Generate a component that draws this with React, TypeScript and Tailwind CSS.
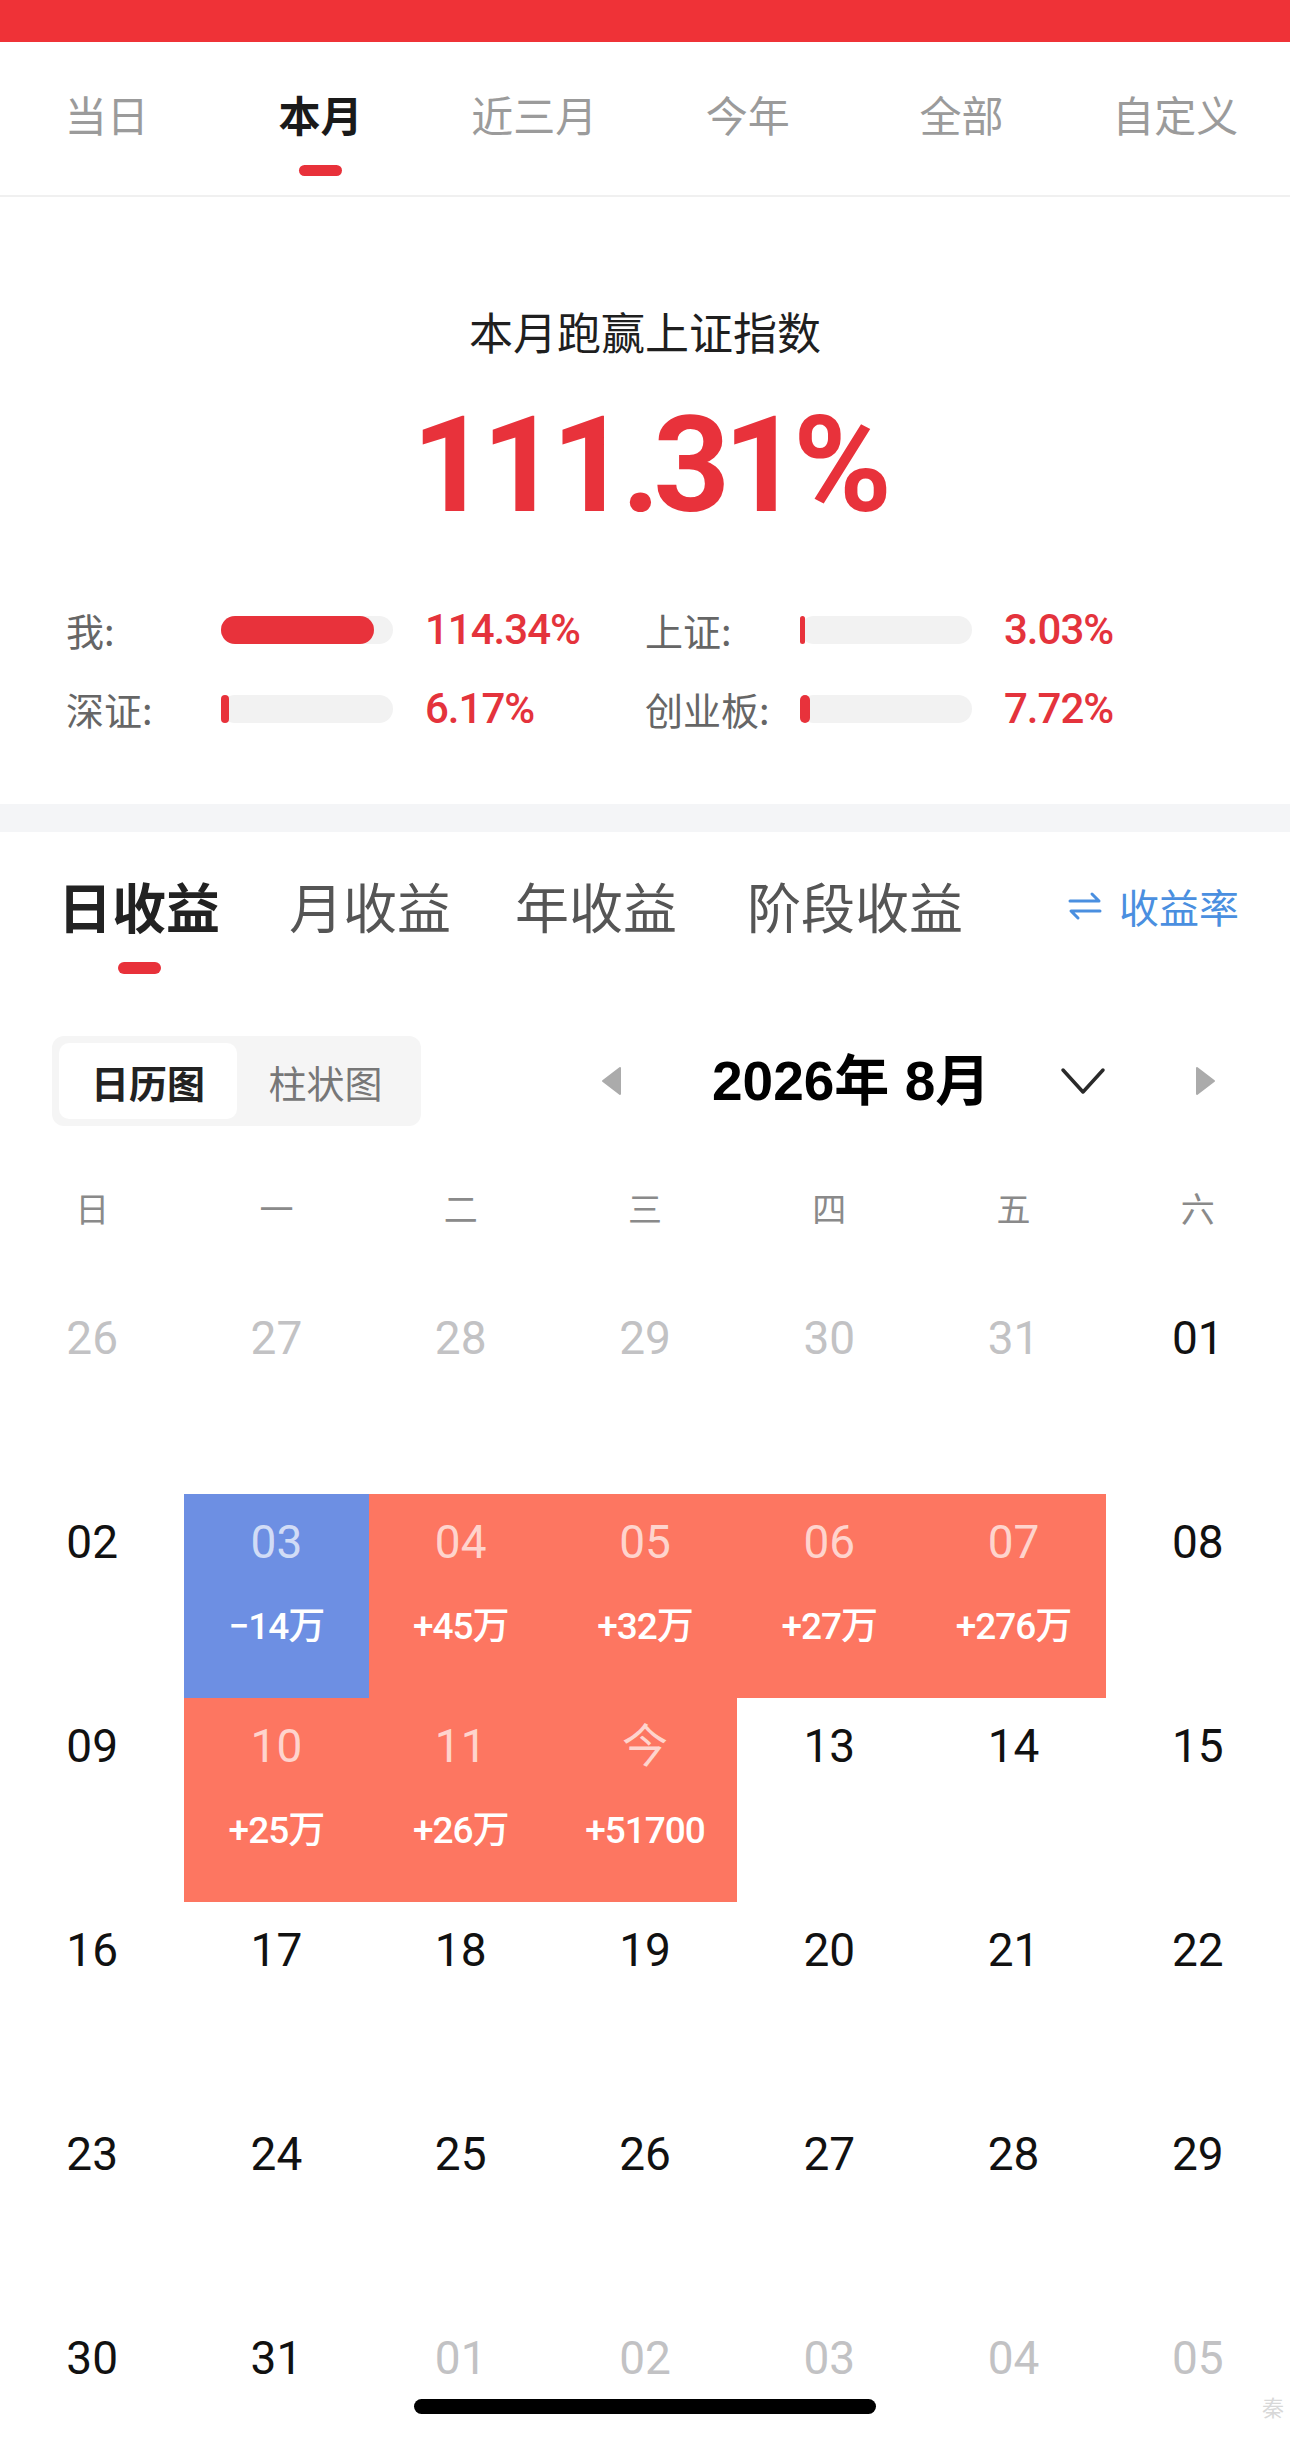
import React from 'react'

const topTabs = ['当日', '本月', '近三月', '今年', '全部', '自定义']

type Stat = { label: string; fill: number; value: string }

const stats: Stat[] = [
  { label: '我:', fill: 153, value: '114.34%' },
  { label: '上证:', fill: 5, value: '3.03%' },
  { label: '深证:', fill: 8, value: '6.17%' },
  { label: '创业板:', fill: 10, value: '7.72%' },
]

type Cell = { d: string; muted?: boolean; amt?: string; tone?: 'up' | 'down' }

const weeks: Cell[][] = [
  [
    { d: '26', muted: true },
    { d: '27', muted: true },
    { d: '28', muted: true },
    { d: '29', muted: true },
    { d: '30', muted: true },
    { d: '31', muted: true },
    { d: '01' },
  ],
  [
    { d: '02' },
    { d: '03', amt: '−14万', tone: 'down' },
    { d: '04', amt: '+45万', tone: 'up' },
    { d: '05', amt: '+32万', tone: 'up' },
    { d: '06', amt: '+27万', tone: 'up' },
    { d: '07', amt: '+276万', tone: 'up' },
    { d: '08' },
  ],
  [
    { d: '09' },
    { d: '10', amt: '+25万', tone: 'up' },
    { d: '11', amt: '+26万', tone: 'up' },
    { d: '今', amt: '+51700', tone: 'up' },
    { d: '13' },
    { d: '14' },
    { d: '15' },
  ],
  ['16', '17', '18', '19', '20', '21', '22'].map((d) => ({ d })),
  ['23', '24', '25', '26', '27', '28', '29'].map((d) => ({ d })),
  [
    { d: '30' },
    { d: '31' },
    { d: '01', muted: true },
    { d: '02', muted: true },
    { d: '03', muted: true },
    { d: '04', muted: true },
    { d: '05', muted: true },
  ],
]

function SwapIcon() {
  return (
    <svg width="36" height="30" viewBox="0 0 36 30" fill="none" stroke="#4a8fe0" strokeWidth="3" strokeLinecap="round" strokeLinejoin="round">
      <path d="M3 10 H32 L25 3" />
      <path d="M33 20 H4 L11 27" />
    </svg>
  )
}

function CalendarCell({ cell }: { cell: Cell }) {
  const bg = cell.tone === 'up' ? 'bg-[#fd7661]' : cell.tone === 'down' ? 'bg-[#6d8fe3]' : ''
  const dateColor = cell.tone ? 'text-white/70' : cell.muted ? 'text-[#c2c2c4]' : 'text-[#111111]'
  return (
    <div className={`h-[204px] flex flex-col items-center pt-[25px] ${bg}`}>
      <span className={`text-[46px] leading-none ${dateColor}`}>{cell.d}</span>
      {cell.amt && (
        <span className="mt-[43px] text-[37px] leading-none font-medium text-white tracking-[-1px]">{cell.amt}</span>
      )}
    </div>
  )
}

export default function App() {
  return (
    <div className="relative w-[1290px] h-[2439px] overflow-hidden bg-white font-['Roboto','Noto_Sans_CJK_SC',sans-serif]">
      {/* status bar */}
      <div className="h-[42px] bg-[#ef3237]" />

      {/* period tabs */}
      <div className="h-[155px] flex pr-[8px] border-b-2 border-[#f0f0f0] font-['Noto_Sans_CJK_SC',sans-serif]">
        {topTabs.map((t) => {
          const active = t === '本月'
          return (
            <div key={t} className="flex-1 flex flex-col items-center pt-[51px]">
              <span className={`text-[42px] leading-none ${active ? 'text-[#1a1a1a] font-bold' : 'text-[#9b9b9b]'}`}>{t}</span>
              {active && <span className="mt-[30px] w-[43px] h-[11px] rounded-full bg-[#e8313a]" />}
            </div>
          )
        })}
      </div>

      {/* summary */}
      <section className="h-[607px] flex flex-col items-center">
        <h1 className="mt-[112px] text-[44px] leading-none text-[#1f1f1f] font-['Noto_Sans_CJK_SC',sans-serif]">本月跑赢上证指数</h1>
        <div className="mt-[46px] pl-[7px] text-[134px] leading-none font-bold text-[#e8323b] font-['Roboto',sans-serif] tracking-[-7px]">111.31%</div>
        <div className="mt-[77px] w-full px-[66px] grid grid-cols-2 gap-y-[39px]">
          {stats.map((s) => (
            <div key={s.label} className="h-[40px] flex items-center">
              <span className="w-[155px] text-[38px] leading-none text-[#666666] font-['Noto_Sans_CJK_SC',sans-serif]">{s.label}</span>
              <div className="w-[172px] h-[28px] rounded-full bg-[#f2f2f2]">
                <div className="h-full rounded-full bg-[#e8323b]" style={{ width: s.fill }} />
              </div>
              <span className="ml-[32px] text-[42px] leading-none font-medium text-[#e4333c] tracking-[-1px]">{s.value}</span>
            </div>
          ))}
        </div>
      </section>

      <div className="h-[28px] bg-[#f4f5f7]" />

      {/* profit tabs */}
      <div className="pt-[47px] pl-[58px] pr-[51px] flex items-start font-['Noto_Sans_CJK_SC',sans-serif]">
        <div className="flex flex-col items-center">
          <span className="text-[54px] leading-none font-bold text-[#222222]">日收益</span>
          <span className="mt-[29px] w-[43px] h-[12px] rounded-full bg-[#e8313a]" />
        </div>
        <span className="ml-[69px] text-[54px] leading-none text-[#555555]">月收益</span>
        <span className="ml-[64px] text-[54px] leading-none text-[#555555]">年收益</span>
        <span className="ml-[70px] text-[54px] leading-none text-[#555555]">阶段收益</span>
        <div className="ml-auto flex items-center gap-[16px] h-[54px]">
          <SwapIcon />
          <span className="text-[40px] leading-none text-[#4a8fe0]">收益率</span>
        </div>
      </div>

      {/* view switch + month nav */}
      <div className="mt-[62px] h-[90px] flex items-center">
        <div className="ml-[52px] w-[369px] h-[90px] rounded-[12px] bg-[#f5f5f5] p-[7px] flex items-center font-['Noto_Sans_CJK_SC',sans-serif]">
          <div className="w-[178px] h-full rounded-[10px] bg-white flex items-center justify-center text-[38px] font-bold text-[#222222]">日历图</div>
          <div className="flex-1 h-full flex items-center justify-center text-[38px] text-[#777777]">柱状图</div>
        </div>
        <svg className="ml-[179px]" width="22" height="30" viewBox="0 0 22 30">
          <path d="M20 2 L3 15 L20 28 Z" fill="#ababab" stroke="#ababab" strokeWidth="2" strokeLinejoin="round" />
        </svg>
        <span className="ml-[90px] text-[55px] leading-none font-bold text-black font-['Liberation_Sans','Noto_Sans_CJK_SC',sans-serif]">2026年 8月</span>
        <svg className="ml-[70px]" width="46" height="28" viewBox="0 0 46 28" fill="none" stroke="#2a2a2a" strokeWidth="3.5" strokeLinecap="round" strokeLinejoin="round">
          <path d="M3 3 L23 25 L43 3" />
        </svg>
        <svg className="ml-[89px]" width="22" height="30" viewBox="0 0 22 30">
          <path d="M2 2 L19 15 L2 28 Z" fill="#ababab" stroke="#ababab" strokeWidth="2" strokeLinejoin="round" />
        </svg>
      </div>

      {/* weekday header */}
      <div className="h-[164px] grid grid-cols-7 items-center font-['Noto_Sans_CJK_SC',sans-serif]">
        {['日', '一', '二', '三', '四', '五', '六'].map((w) => (
          <span key={w} className="text-center text-[34px] leading-none text-[#8a8a8a]">{w}</span>
        ))}
      </div>

      {/* calendar grid */}
      <div className="grid grid-cols-7">
        {weeks.flat().map((c, i) => (
          <CalendarCell key={i} cell={c} />
        ))}
      </div>

      {/* watermark */}
      <span className="absolute right-[6px] bottom-[16px] text-[22px] text-[#d8d8d8] font-['Noto_Sans_CJK_SC',sans-serif]">秦</span>

      {/* home indicator */}
      <div className="absolute left-[414px] bottom-[25px] w-[462px] h-[15px] rounded-full bg-black" />
    </div>
  )
}
